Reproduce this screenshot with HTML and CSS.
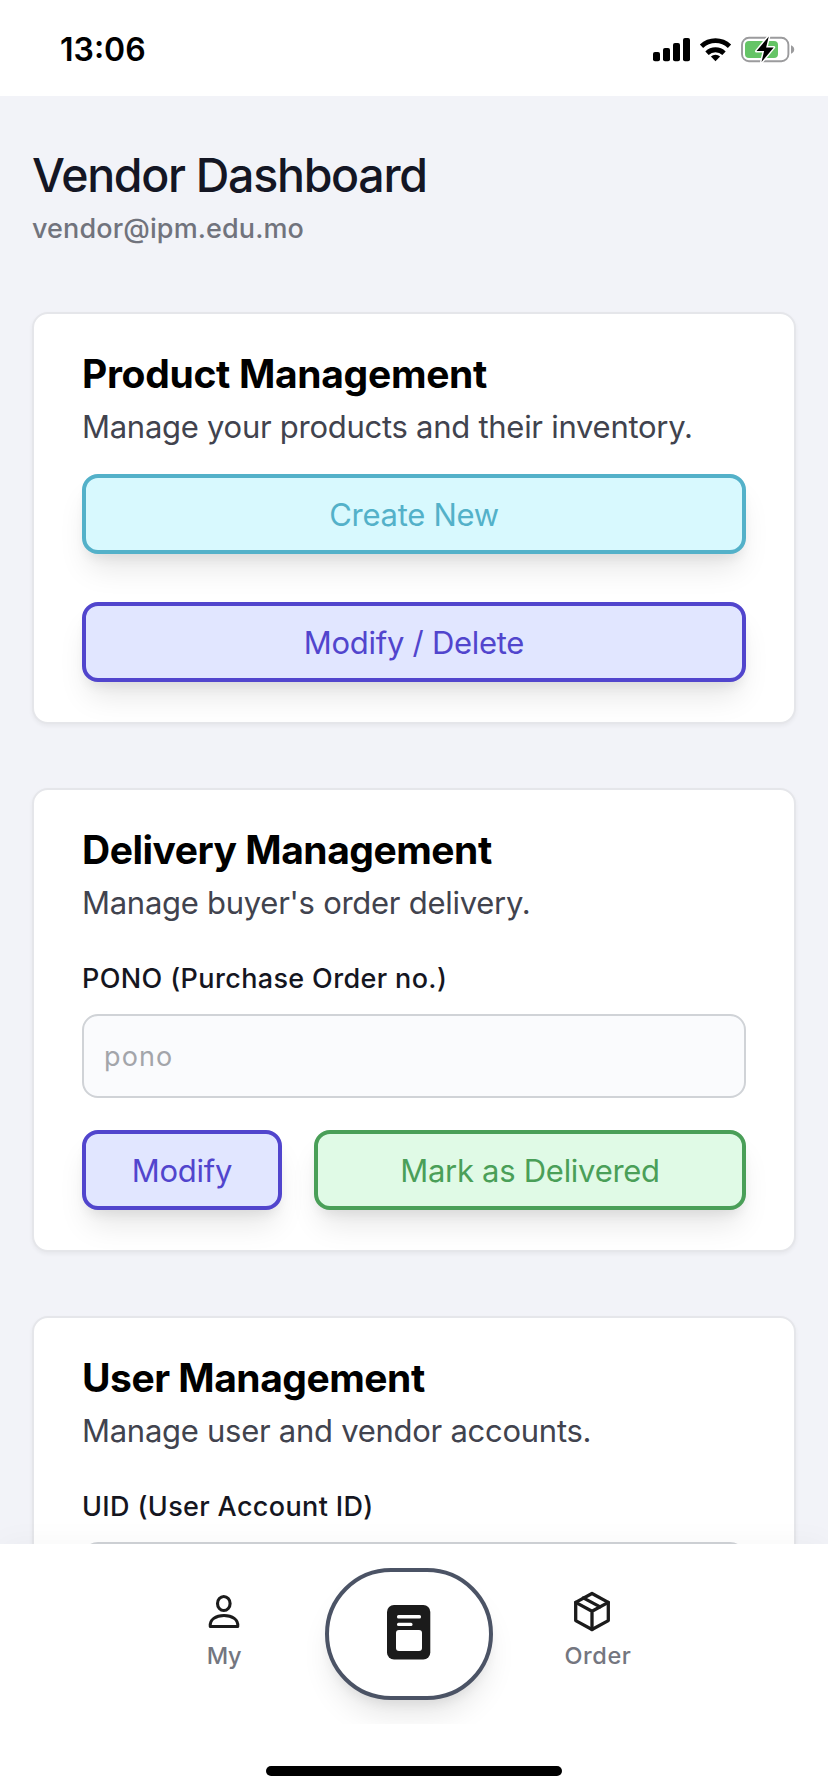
FILE: index.html
```
<!DOCTYPE html>
<html lang="en">
<head>
<meta charset="utf-8">
<title>Vendor Dashboard</title>
<link rel="stylesheet" href="styles.css">
</head>
<body>
<div class="screen">
  <header class="status">
    <span class="time">13:06</span>
    <svg class="status-icons" width="150" height="40" viewBox="650 30 150 40">
      <rect x="653" y="52" width="7" height="9.3" rx="2"/>
      <rect x="663" y="48" width="7" height="13.3" rx="2"/>
      <rect x="673" y="43" width="7" height="18.3" rx="2"/>
      <rect x="683" y="38" width="7" height="23.3" rx="2"/>
      <g fill="none" stroke="#000" stroke-width="4.8">
        <path d="M701.5 46.2a20.3 20.3 0 0 1 28 0"/>
        <path d="M707 53.2a12.2 12.2 0 0 1 17 0"/>
      </g>
      <path d="M715.5 61.2l-4.6-4.7a6.8 6.8 0 0 1 9.2 0z"/>
      <rect x="742" y="37.8" width="46.4" height="23.4" rx="7" fill="none" stroke="#9b9b9d" stroke-width="1.9"/>
      <rect x="745" y="41" width="33" height="17" rx="4" fill="#65c466"/>
      <path d="M791 45.3q3.2 1.2 3.2 4.2t-3.2 4.2z" fill="#9b9b9d"/>
      <path d="M768.8 36.5l-12.3 14.6h7.6l-2.6 11 12.2-14.7h-7.6z" stroke="#fff" stroke-width="3" paint-order="stroke" stroke-linejoin="round"/>
    </svg>
  </header>

  <main class="content">
    <h1 class="title">Vendor Dashboard</h1>
    <p class="email">vendor@ipm.edu.mo</p>

    <div class="cards">
      <section class="card">
        <h2 class="card-title product">Product Management</h2>
        <p class="desc">Manage your products and their inventory.</p>
        <div class="stack">
          <button class="btn cyan">Create New</button>
          <button class="btn indigo">Modify / Delete</button>
        </div>
      </section>

      <section class="card">
        <h2 class="card-title">Delivery Management</h2>
        <p class="desc">Manage buyer's order delivery.</p>
        <label class="label" for="pono">PONO (Purchase Order no.)</label>
        <input class="input" id="pono" placeholder="pono">
        <div class="row">
          <button class="btn indigo">Modify</button>
          <button class="btn green">Mark as Delivered</button>
        </div>
      </section>

      <section class="card">
        <h2 class="card-title">User Management</h2>
        <p class="desc">Manage user and vendor accounts.</p>
        <label class="label" for="uid">UID (User Account ID)</label>
        <input class="input" id="uid">
      </section>
    </div>
  </main>

  <nav class="nav">
    <div class="tabs">
      <a class="tab my">
        <svg width="36" height="44" viewBox="206 1588 36 44" fill="none" stroke="#1b1b1b" stroke-width="3.1" stroke-linejoin="round">
          <ellipse cx="223.8" cy="1603.5" rx="6.3" ry="7"/>
          <path d="M210.300 1626.500C209.300 1619.500 216 1615.500 224 1615.500S238.700 1619.500 237.700 1626.500Z"/>
        </svg>
        <span>My</span>
      </a>
      <a class="pill">
        <svg width="44" height="55" viewBox="0 0 44 55">
          <rect width="43.3" height="54.5" rx="7" fill="#1b1b1b"/>
          <rect x="10" y="10" width="24" height="3.6" rx="1.500" fill="#fff"/>
          <rect x="10" y="17.700" width="15.500" height="3.400" rx="1.500" fill="#fff"/>
          <rect x="9" y="25" width="26" height="21" rx="3" fill="#fff"/>
        </svg>
      </a>
      <a class="tab order">
        <svg width="44" height="44" viewBox="570 1588 44 44" fill="none" stroke="#1b1b1b" stroke-width="3.3" stroke-linejoin="round" stroke-linecap="round">
          <path d="M592 1593.500l16.300 8.900v18.200l-16.300 8.900l-16.300-8.900v-18.200z"/>
          <path d="M575.700 1602.400l16.300 8.900l16.300-8.900M592 1611.300v18.200M583.300 1597.900l16.800 9"/>
        </svg>
        <span>Order</span>
      </a>
    </div>
    <div class="home-bar"></div>
  </nav>
</div>
</body>
</html>
```
FILE: styles.css
```
* { box-sizing: border-box; }

body {
  margin: 0;
  font-family: Inter, "Liberation Sans", sans-serif;
  background: #fff;
}

h1, h2, p { margin: 0; }

.screen {
  width: 828px;
  height: 1792px;
  display: flex;
  flex-direction: column;
  overflow: hidden;
}

.status {
  flex: none;
  height: 96px;
  padding: 0 28px 0 60px;
  display: flex;
  justify-content: space-between;
  align-items: flex-start;
}

.time {
  padding-top: 30px;
  font-size: 32px;
  line-height: 40px;
  font-weight: 600;
}

.status-icons { margin-top: 30px; }

.content {
  flex: 1;
  min-height: 0;
  overflow: hidden;
  padding: 47px 32px 0;
  background: #f2f3f8;
}

.title {
  font-size: 46.5px;
  line-height: 64px;
  font-weight: 500;
  letter-spacing: -1.3px;
  color: #141624;
}

.email {
  padding-top: 1px;
  font-size: 27px;
  line-height: 41px;
  font-weight: 500;
  letter-spacing: 0.12px;
  color: #71737d;
}

.cards {
  margin-top: 63px;
  display: flex;
  flex-direction: column;
  gap: 64px;
}

.card {
  padding: 32px 48px 40px;
  display: flex;
  flex-direction: column;
  border: 2px solid #e5e6ea;
  border-radius: 16px;
  background: #fff;
  box-shadow: 0 2px 4px rgba(0, 0, 0, 0.05);
}

.card-title {
  margin-bottom: 1px;
  font-size: 39px;
  line-height: 56px;
  font-weight: 700;
  letter-spacing: -0.48px;
  color: #000;
}

.card-title.product { letter-spacing: -0.31px; }

.desc {
  font-size: 31px;
  line-height: 48px;
  letter-spacing: -0.27px;
  color: #41434e;
}

.stack {
  margin-top: 23px;
  display: flex;
  flex-direction: column;
  gap: 48px;
}

.btn {
  height: 80px;
  padding: 1px 0 0;
  border: 4px solid;
  border-radius: 16px;
  font: 400 31px/70px Inter, "Liberation Sans", sans-serif;
  letter-spacing: -0.28px;
  box-shadow: 0 20px 30px -6px rgba(0, 0, 0, 0.1), 0 8px 12px -4px rgba(0, 0, 0, 0.07);
}

.cyan { color: #53b1c9; background: #d8f9fe; }
.indigo { color: #5145cd; background: #e1e6ff; }
.green { color: #4a9f58; background: #e0fae6; }

.label {
  margin-top: 32px;
  font-size: 27px;
  line-height: 40px;
  font-weight: 500;
  letter-spacing: 0.36px;
  color: #15161f;
}

.input {
  height: 84px;
  margin-top: 15px;
  padding: 0 20px;
  border: 2px solid #d0d3d7;
  border-radius: 16px;
  background: #fafbfd;
  font: 400 27px Inter, "Liberation Sans", sans-serif;
  letter-spacing: 1.1px;
}

.input::placeholder { color: #a3a5aa; opacity: 1; }

.row {
  margin-top: 32px;
  display: grid;
  grid-template-columns: 200px 1fr;
  gap: 32px;
}

.nav {
  position: relative;
  flex: none;
  height: 248px;
  background: #fff;
  box-shadow: 0 0 30px rgba(0, 0, 0, 0.04);
}

.tabs {
  height: 180px;
  padding: 24px 0 0 164px;
  display: flex;
  align-items: flex-start;
  overflow: hidden;
}

.tab {
  width: 120px;
  padding-top: 20px;
  display: flex;
  flex-direction: column;
  align-items: center;
  font-size: 23.5px;
  line-height: 32px;
  font-weight: 450;
  color: #74767f;
}

.tab svg { display: block; margin-bottom: 8px; }
.my { letter-spacing: -0.2px; }
.my svg { margin-right: 1px; }
.order { margin-left: 45px; letter-spacing: 0.6px; }
.order svg { margin-right: 12px; }

.pill {
  width: 168px;
  height: 132px;
  margin-left: 41px;
  display: flex;
  align-items: center;
  justify-content: center;
  padding-right: 1px;
  padding-bottom: 3px;
  border: 4px solid #4b5365;
  border-radius: 66px;
  background: #fff;
  box-shadow: 0 20px 30px -6px rgba(0, 0, 0, 0.1), 0 8px 12px -4px rgba(0, 0, 0, 0.07);
}

.home-bar {
  width: 296px;
  height: 10px;
  margin: 42px auto 0;
  border-radius: 5px;
  background: #000;
}
```
